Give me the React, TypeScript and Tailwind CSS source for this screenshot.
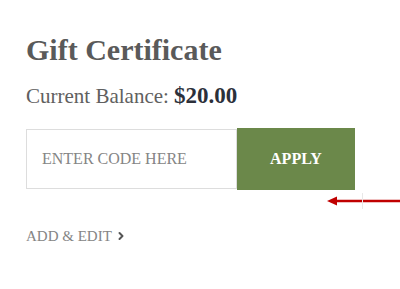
import { ChevronRight } from 'lucide-react';

const serif = { fontFamily: '"Liberation Serif", "Times New Roman", serif' };

const App = () => {
  return (
    <div className="relative w-[400px] h-[289px] bg-white overflow-hidden" style={serif}>
      <div className="pl-[26px] pt-[35px]">
        <h1 className="text-[30px] leading-[30px] font-bold text-[#5a5a5a]">Gift Certificate</h1>

        <p className="mt-[19px] leading-[24px] text-[#606060]">
          <span className="text-[21px]">Current Balance: </span>
          <span className="text-[23px] font-bold text-[#2c303a]">$20.00</span>
        </p>

        <div className="mt-[18px] flex h-[62px]">
          <div className="w-[211px] my-px border border-[#dddddd] bg-white flex items-center pl-[15px]">
            <input
              type="text"
              placeholder="ENTER CODE HERE"
              className="w-full bg-transparent outline-none text-[16px] text-[#555] placeholder:text-[#858585]"
              style={serif}
            />
          </div>
          <button className="w-[118px] h-full bg-[#6b884a] text-white text-[16px] font-bold" style={serif}>
            APPLY
          </button>
        </div>

        <a href="#" className="mt-[35px] inline-flex items-center gap-[3px] text-[15px] text-[#858585]">
          ADD &amp; EDIT
          <ChevronRight className="w-[12px] h-[12px] text-[#555]" strokeWidth={4} />
        </a>
      </div>

      {/* annotation arrow */}
      <svg className="absolute left-[326px] top-[195px]" width="74" height="12" viewBox="0 0 74 12">
        <path d="M10 6 H74" stroke="#c00000" strokeWidth="2.5" />
        <path d="M1 6 L11 1.5 L11 10.5 Z" fill="#c00000" />
      </svg>
      <div className="absolute left-[362px] top-[193px] w-px h-[16px] bg-[#e8e8e8]" />
    </div>
  );
};

export default App;
